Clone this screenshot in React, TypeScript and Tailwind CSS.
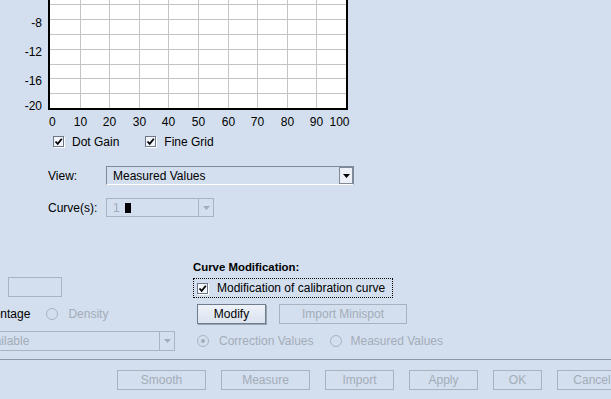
import React from 'react';

const BG = 'bg-[#d3dfee]';

const CheckBox = ({ checked = true }: { checked?: boolean }) => (
  <span className="flex h-[11px] w-[11px] shrink-0 items-center justify-center border border-[#6b7788] bg-[#f2f5fa] shadow-[1px_1px_0_#ffffff]">
    {checked && (
      <svg width="9" height="9" viewBox="0 0 9 9">
        <path d="M1.5 4.5 L3.7 6.8 L7.8 1.8" fill="none" stroke="#000" strokeWidth="1.8" />
      </svg>
    )}
  </span>
);

const Radio = ({ selected = false }: { selected?: boolean }) => (
  <span className="flex h-[12px] w-[12px] shrink-0 items-center justify-center rounded-full border border-[#aab3bf]">
    {selected && <span className="h-[4px] w-[4px] rounded-full bg-[#a3acb8]" />}
  </span>
);

const DisabledButton = ({ label, w }: { label: string; w: string }) => (
  <div className={`flex h-[20px] ${w} shrink-0 items-center justify-center border border-[#a9b3c0] text-[#a3acb8]`}>
    {label}
  </div>
);

const Arrow = ({ color }: { color: string }) => (
  <svg width="7" height="4" viewBox="0 0 7 4">
    <path d="M0 0 H7 L3.5 4 Z" fill={color} />
  </svg>
);

const Chart = () => {
  const xs = [80, 109, 139, 168, 198, 228, 257, 287, 316];
  const ys = [4, 19, 34, 49, 64, 78, 93];
  const yLabels = [
    { t: '-8', y: 26.5 },
    { t: '-12', y: 56 },
    { t: '-16', y: 85 },
    { t: '-20', y: 109.5 },
  ];
  const xLabels = ['10', '20', '30', '40', '50', '60', '70', '80', '90'];
  return (
    <svg width="360" height="130" className="block" style={{ fontFamily: '"Liberation Sans", Arial, sans-serif' }}>
      <rect x="50" y="0" width="296" height="108" fill="#ffffff" />
      {xs.map((x) => (
        <line key={x} x1={x + 0.5} y1="0" x2={x + 0.5} y2="108" stroke="#c4c4c4" strokeWidth="1" />
      ))}
      {ys.map((y) => (
        <line key={y} x1="50" y1={y + 0.5} x2="346" y2={y + 0.5} stroke="#c4c4c4" strokeWidth="1" />
      ))}
      <rect x="48" y="0" width="2" height="110" fill="#000" />
      <rect x="346" y="0" width="2" height="110" fill="#000" />
      <rect x="48" y="108" width="300" height="2" fill="#000" />
      {yLabels.map((l) => (
        <text key={l.t} x="42" y={l.y} textAnchor="end" fontSize="12" fill="#000">
          {l.t}
        </text>
      ))}
      <text x="49" y="126" fontSize="12" fill="#000">0</text>
      {xLabels.map((t, i) => (
        <text key={t} x={xs[i] + 0.5} y="126" textAnchor="middle" fontSize="12" fill="#000">
          {t}
        </text>
      ))}
      <text x="349.5" y="126" textAnchor="end" fontSize="12" fill="#000">100</text>
    </svg>
  );
};

export default function App() {
  return (
    <div
      className={`h-[399px] w-[611px] overflow-hidden ${BG} text-[12px] leading-[14px] text-black`}
      style={{ fontFamily: '"Liberation Sans", Arial, sans-serif' }}
    >
      <Chart />

      {/* chart options */}
      <div className="mt-[5px] flex h-[13px] items-center pl-[53px]">
        <CheckBox />
        <span className="ml-[8px]">Dot Gain</span>
        <span className="ml-[26px]">
          <CheckBox />
        </span>
        <span className="ml-[8px]">Fine Grid</span>
      </div>

      {/* view */}
      <div className="mt-[18px] flex h-[19px] items-center pl-[48px]">
        <span className="w-[58px]">View:</span>
        <div className="flex h-[19px] w-[248px] items-stretch border border-[#7f8a99] border-b-white">
          <span className="flex flex-1 items-center pl-[6px]">Measured Values</span>
          <span className="flex w-[14px] items-center justify-center border border-[#7f8a99] bg-[#edf1f7]">
            <Arrow color="#000" />
          </span>
        </div>
      </div>

      {/* curves */}
      <div className="mt-[13px] flex h-[19px] items-center pl-[48px]">
        <span className="w-[58px]">Curve(s):</span>
        <div className="flex h-[19px] w-[108px] items-stretch border border-[#aab3c0]">
          <span className="flex flex-1 items-center pl-[6px] text-[#a3acb8]">
            1
            <span className="ml-[5px] h-[10px] w-[6px] bg-black" />
          </span>
          <span className="flex w-[15px] items-center justify-center border-l border-[#aab3c0]">
            <Arrow color="#a3acb8" />
          </span>
        </div>
      </div>

      {/* lower panel */}
      <div className="mt-[43px] flex h-[99px]">
        <div className="w-[193px] shrink-0">
          <div className="ml-[8px] mt-[17px] h-[20px] w-[54px] border border-[#aab3c0]" />
          <div className="-ml-[31px] mt-[10px] flex h-[14px] items-center whitespace-nowrap">
            <span>Percentage</span>
            <span className="ml-[16px]">
              <Radio />
            </span>
            <span className="ml-[10px] text-[#a3acb8]">Density</span>
          </div>
          <div className="-ml-[48px] mt-[10px] flex h-[20px] w-[223px] items-stretch border border-[#aab3c0]">
            <span className="flex flex-1 items-center pl-[7px] text-[#a3acb8]">Not available</span>
            <span className="flex w-[15px] items-center justify-center border-l border-[#aab3c0]">
              <Arrow color="#a3acb8" />
            </span>
          </div>
        </div>

        <div className="flex-1">
          <div className="h-[14px] text-[11.4px] font-bold">Curve Modification:</div>
          <div className="mt-[4px] flex h-[20px] w-[200px] items-center border border-dotted border-black pl-[3px]">
            <CheckBox />
            <span className="ml-[9px] whitespace-nowrap">Modification of calibration curve</span>
          </div>
          <div className="mt-[6px] flex items-center gap-[13px] pl-[4px]">
            <div className="flex h-[20px] w-[69px] items-center justify-center border border-[#6f7c8d] bg-gradient-to-b from-[#eef2f8] to-[#dbe3ef] shadow-[1px_1px_0_#9aa5b3]">
              Modify
            </div>
            <DisabledButton label="Import Minispot" w="w-[128px]" />
          </div>
          <div className="mt-[10px] flex h-[13px] items-center whitespace-nowrap pl-[4px] text-[#a3acb8]">
            <Radio selected />
            <span className="ml-[10px]">Correction Values</span>
            <span className="ml-[16px]">
              <Radio />
            </span>
            <span className="ml-[9px]">Measured Values</span>
          </div>
        </div>
      </div>

      <div className="h-px w-full bg-[#8d97a3]" />

      <div className="mt-[10px] flex gap-[15px] pl-[117px]">
        <DisabledButton label="Smooth" w="w-[89px]" />
        <DisabledButton label="Measure" w="w-[89px]" />
        <DisabledButton label="Import" w="w-[69px]" />
        <DisabledButton label="Apply" w="w-[69px]" />
        <DisabledButton label="OK" w="w-[49px]" />
        <DisabledButton label="Cancel" w="w-[70px]" />
      </div>
    </div>
  );
}
